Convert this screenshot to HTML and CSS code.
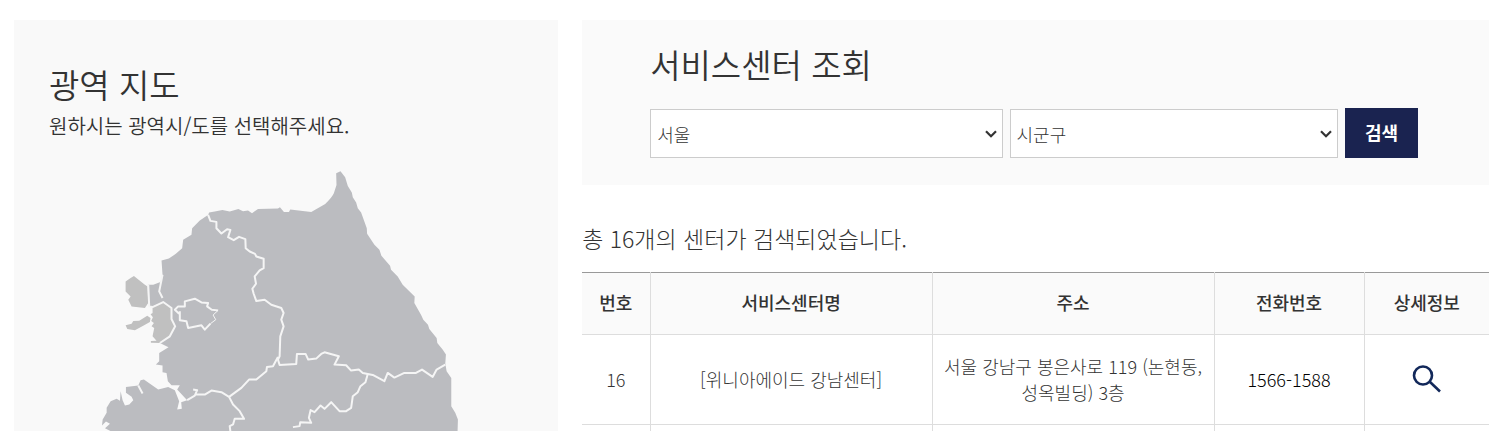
FILE: index.html
```
<!DOCTYPE html>
<html lang="ko">
<head>
  <meta charset="UTF-8">
  <title>서비스센터 조회</title>
  <meta name="viewport" content="width=device-width, initial-scale=1.0">
  <link rel="stylesheet" href="styles.css">
</head>
<body>
  <main class="contenido">
    <section class="mapa">
      <h2>광역 지도</h2>
      <p>원하시는 광역시/도를 선택해주세요.</p>
      <svg class="mapa-svg" viewBox="12 24 1152 816" aria-hidden="true">
        <!-- mainland -->
        <path class="tierra" d="M355 165L358 158 375 155 398 150 420 155 446 147 460 154 475 152 487 160 505 147 565 146 571 142 583 156 598 156 602 149 665 156 707 132Q728 112 733 100L741 75 740 40 753 34 767 52 775 78 787 98 790 112 800 128 805 145 815 158 832 205 833 222 855 255 870 270 876 288 902 318 905 330 925 350 940 375 976 410 975 430 995 465 1002 480 1016 495 1020 508 1042 535 1044 550 1060 570 1070 585 1068 612 1072 635 1086 655 1086 740 1098 760 1106 780 1104 850 75 850 62 815 45 806 60 793 48 786 36 798 38 780 50 760 50 745 62 725 80 718 90 724 92 695 98 722 105 738 118 735 130 722 125 712 108 700 108 682 145 678 152 662 162 660 205 690 235 682 255 692 268 725 262 750 276 748 274 728 292 722 262 690 270 677 245 677 234 665 230 640 218 638 218 618 198 615 208 605 208 580 236 563 210 550 240 530 256 500 245 478 245 445 220 427 190 440 178 440 175 375 190 375 212 367 218 345 215 302 237 296 258 282 277 265 280 240 305 225 307 205 330 182 350 168Z"/>
        <!-- Incheon and its islands -->
        <path class="isla" d="M188 442L220 427 245 445 245 478 256 500 240 530 210 550 183 549 183 544 200 543 188 530 193 505 185 500 192 490 184 484 189 473 182 464 188 460Z"/>
        <path class="isla" d="M107 365L122 355 132 349 165 375 173 380 175 430 165 445 125 440 115 420 122 410 107 395Z"/>
        <path class="isla" d="M107 497L125 492 130 484 148 483 172 468 182 475 180 487 160 498 135 512 112 508Z"/>
        <!-- borders -->
        <path class="linde" d="M355 165L362 183 380 186 380 205 395 221 412 208 422 210 415 232 432 241 448 231 467 238 468 265 480 275 496 282 500 290 522 297 522 325 510 332 495 350 499 372 488 387 492 402 500 424 525 420 545 435 575 445 582 460 575 480 582 500 572 530 570 590 565 600 570 616 620 613 622 583 648 583 656 600 680 597 695 583 705 578 748 590 735 615 770 617 785 633 808 630 820 640 835 643 850 646 885 665 895 640 915 654 945 640 980 640 998 630 1030 652 1042 630 1068 615"/>
        <path class="linde" d="M292 722L315 708 322 692 310 690M315 705L345 705 365 693 395 698 418 712 455 685 478 660 500 660 530 635 532 622 550 620 565 592M418 712L430 735 450 755 463 778 435 778 430 795 420 800 425 840"/>
        <path class="linde" d="M835 643L828 668 813 680 805 698 790 710 785 745 770 755 750 755 725 728 705 748 693 738 675 758 663 752 658 775 665 790 632 788 630 800 610 803"/>
        <path class="linde" d="M268 462L255 450 265 440 285 440 285 425 315 417 335 428 355 430 352 440 366 450 385 452M270 455L270 482 290 485 295 505 335 497 345 510 362 492M218 345L208 395 218 415M175 375L178 440 188 442 220 427 245 445 245 478 256 500 240 530 210 550M145 678L158 702"/>
        <path class="linde fina" d="M385 452L370 466 378 480 362 492"/>
      </svg>
    </section>

    <section class="centros">
      <div class="consulta">
        <h2>서비스센터 조회</h2>
        <form class="filtros">
          <select aria-label="시도">
            <option>서울</option>
          </select>
          <select aria-label="시군구">
            <option>시군구</option>
          </select>
          <button type="button">검색</button>
        </form>
      </div>

      <p class="resultado">총 16개의 센터가 검색되었습니다.</p>

      <table class="lista">
        <colgroup>
          <col class="col-num">
          <col class="col-nombre">
          <col class="col-direccion">
          <col class="col-telefono">
          <col class="col-detalle">
        </colgroup>
        <thead>
          <tr>
            <th>번호</th>
            <th>서비스센터명</th>
            <th>주소</th>
            <th>전화번호</th>
            <th>상세정보</th>
          </tr>
        </thead>
        <tbody>
          <tr>
            <td>16</td>
            <td>[위니아에이드 강남센터]</td>
            <td>서울 강남구 봉은사로 119 (논현동, 성옥빌딩) 3층</td>
            <td><a class="telefono" href="tel:1566-1588">1566-1588</a></td>
            <td>
              <a class="detalle" href="#" aria-label="상세정보">
                <svg viewBox="0 0 30 30" aria-hidden="true">
                  <circle cx="11" cy="11.5" r="9"/>
                  <path d="M17.5 17.5L28 27.5"/>
                </svg>
              </a>
            </td>
          </tr>
          <tr>
            <td></td>
            <td></td>
            <td></td>
            <td></td>
            <td></td>
          </tr>
        </tbody>
      </table>
    </section>
  </main>
</body>
</html>
```
FILE: styles.css
```
* { box-sizing: border-box; }

body {
  margin: 0;
  background: #fff;
  color: #333;
  font-family: 'Noto Sans CJK KR', sans-serif;
  font-size: 18px;
  font-weight: 300;
}

h2 {
  margin: 0;
  font-size: 33px;
  font-weight: 350;
  line-height: 48px;
}

.contenido {
  display: grid;
  grid-template-columns: 3fr 5fr;
  gap: 24px;
  height: 100vh;
  padding: 20px 6px 0 14px;
  overflow: hidden;
}

.mapa {
  background: #f9f9f9;
  padding: 40px 36px 0 35px;
}
.mapa p {
  margin: 0;
  font-size: 20px;
  font-weight: 350;
  line-height: 36px;
}
.mapa-svg {
  display: block;
  width: 81%;
  margin: 24px auto 0;
}
.tierra { fill: #bbbcc0; }
.isla { fill: #c0c0c0; }
.linde {
  fill: none;
  stroke: #f5f5f5;
  stroke-width: 6;
  stroke-linejoin: round;
}
.fina { stroke-width: 3; }

.consulta {
  background: #fafafa;
  padding: 20px 71px 27px 68px;
}
.filtros {
  display: grid;
  grid-template-columns: 353fr 329fr 73px;
  align-items: end;
  column-gap: 7px;
  margin-top: 20px;
}
.filtros select {
  min-width: 0;
  height: 49px;
  padding: 0 24px 0 6px;
  border: 1px solid #ccc;
  border-radius: 0;
  appearance: none;
  background: #fff url("data:image/svg+xml,%3Csvg xmlns='http://www.w3.org/2000/svg' width='12' height='8' fill='none' stroke='%23333' stroke-width='2.2'%3E%3Cpath d='M1 1.2L6 6.2L11 1.2'/%3E%3C/svg%3E") no-repeat right 5px center;
  color: #333;
  font: inherit;
}
.filtros button {
  height: 50px;
  padding: 0 0 2px;
  border: none;
  background: #1a2350;
  color: #fff;
  font: inherit;
  font-weight: 700;
  cursor: pointer;
}

.resultado {
  margin: 35px 0 16px;
  font-size: 23px;
  line-height: 36px;
}

.lista {
  width: 100%;
  table-layout: fixed;
  border-collapse: collapse;
  border-top: 1px solid #999;
  text-align: center;
  word-break: keep-all;
}
.col-num { width: 68px; }
.col-telefono { width: 150px; }
.col-detalle { width: 125px; }

.lista th, .lista td {
  border-bottom: 1px solid #ddd;
  border-left: 1px solid #ddd;
  padding: 0 8px 2px;
  line-height: 26px;
}
.lista th:first-child, .lista td:first-child { border-left: none; }
.lista th {
  height: 62px;
  padding-bottom: 4px;
  background: #fafafa;
  font-weight: 500;
}
.lista td { height: 90px; }

.telefono { color: #000; text-decoration: none; }
.detalle svg {
  display: block;
  width: 30px;
  height: 30px;
  margin: 0 auto;
  fill: none;
  stroke: #12285a;
  stroke-width: 2.6;
}
```
